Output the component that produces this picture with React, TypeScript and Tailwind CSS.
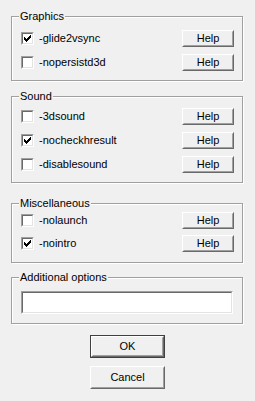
import React, { useState } from 'react';

// --- Classic dialog widgets ---

const CheckMark: React.FC = () => (
  <svg width="7" height="7" viewBox="0 0 7 7" shapeRendering="crispEdges" className="block">
    <path d="M6 0h1v3h-1zM5 1h1v3h-1zM4 2h1v3h-1zM0 2h1v3h-1zM1 3h1v3h-1zM2 4h1v3h-1zM3 3h1v3h-1z" fill="#000" />
  </svg>
);

const CheckBox: React.FC<{ checked: boolean; onToggle: () => void }> = ({ checked, onToggle }) => (
  <button
    type="button"
    onClick={onToggle}
    className="w-[13px] h-[13px] shrink-0 border border-t-[#a0a0a0] border-l-[#a0a0a0] border-b-white border-r-white"
  >
    <div className="w-full h-full bg-white border border-t-[#696969] border-l-[#696969] border-b-[#e3e3e3] border-r-[#e3e3e3] flex items-center justify-center">
      {checked && <CheckMark />}
    </div>
  </button>
);

const PushButton: React.FC<{ children: React.ReactNode; className?: string; isDefault?: boolean }> = ({ children, className = '', isDefault }) => (
  <button
    type="button"
    className={`bg-[#f0f0f0] text-black ${isDefault ? 'border border-[#404040]' : ''} ${className}`}
  >
    <div className="w-full h-full border border-t-white border-l-white border-b-[#696969] border-r-[#696969]">
      <div className="w-full h-full border border-transparent border-b-[#a0a0a0] border-r-[#a0a0a0] flex items-center justify-center leading-none">
        {children}
      </div>
    </div>
  </button>
);

const GroupBox: React.FC<{ title: string; children: React.ReactNode; className?: string }> = ({ title, children, className = '' }) => (
  <div className={`relative w-[232px] border border-[#a0a0a0] shadow-[inset_1px_1px_0_#fff,1px_1px_0_#fff] ${className}`}>
    <span className="absolute left-[7px] top-[-7px] px-[1px] bg-[#f0f0f0] leading-[13px]">{title}</span>
    {children}
  </div>
);

const OptionRow: React.FC<{ label: string; checked: boolean; onToggle: () => void }> = ({ label, checked, onToggle }) => (
  <div className="flex items-center justify-between h-[17px]">
    <div className="flex items-center gap-[5px]">
      <CheckBox checked={checked} onToggle={onToggle} />
      <span className="leading-[13px]">{label}</span>
    </div>
    <PushButton className="w-[52px] h-[17px]">Help</PushButton>
  </div>
);

// --- Main dialog ---

const App: React.FC = () => {
  const [opts, setOpts] = useState<Record<string, boolean>>({
    glide2vsync: true,
    nopersistd3d: false,
    '3dsound': false,
    nocheckhresult: true,
    disablesound: false,
    nolaunch: false,
    nointro: true,
  });
  const [extra, setExtra] = useState('');

  const toggle = (k: string) => setOpts(o => ({ ...o, [k]: !o[k] }));

  return (
    <div
      className="w-[255px] h-[401px] bg-[#f0f0f0] text-black text-[11px] pl-[11px] pt-[16px] overflow-hidden"
      style={{ fontFamily: '"Liberation Sans", Arial, sans-serif' }}
    >
      <GroupBox title="Graphics" className="pt-[13px] pb-[9px] pl-[9px] pr-[8px]">
        <div className="flex flex-col gap-[7px]">
          <OptionRow label="-glide2vsync" checked={opts.glide2vsync} onToggle={() => toggle('glide2vsync')} />
          <OptionRow label="-nopersistd3d" checked={opts.nopersistd3d} onToggle={() => toggle('nopersistd3d')} />
        </div>
      </GroupBox>

      <GroupBox title="Sound" className="mt-[15px] pt-[11px] pb-[9px] pl-[9px] pr-[8px]">
        <div className="flex flex-col gap-[7px]">
          <OptionRow label="-3dsound" checked={opts['3dsound']} onToggle={() => toggle('3dsound')} />
          <OptionRow label="-nocheckhresult" checked={opts.nocheckhresult} onToggle={() => toggle('nocheckhresult')} />
          <OptionRow label="-disablesound" checked={opts.disablesound} onToggle={() => toggle('disablesound')} />
        </div>
      </GroupBox>

      <GroupBox title="Miscellaneous" className="mt-[20px] pt-[8px] pb-[10px] pl-[9px] pr-[8px]">
        <div className="flex flex-col gap-[6px]">
          <OptionRow label="-nolaunch" checked={opts.nolaunch} onToggle={() => toggle('nolaunch')} />
          <OptionRow label="-nointro" checked={opts.nointro} onToggle={() => toggle('nointro')} />
        </div>
      </GroupBox>

      <GroupBox title="Additional options" className="mt-[14px] pt-[13px] pb-[9px] pl-[9px] pr-[9px]">
        <div className="h-[23px] border border-t-[#a0a0a0] border-l-[#a0a0a0] border-b-white border-r-white">
          <input
            value={extra}
            onChange={e => setExtra(e.target.value)}
            className="w-full h-full bg-white border border-t-[#696969] border-l-[#696969] border-b-[#e3e3e3] border-r-[#e3e3e3] px-[2px] outline-none"
          />
        </div>
      </GroupBox>

      <div className="flex flex-col items-center gap-[8px] mt-[11px] pr-[11px]">
        <PushButton isDefault className="w-[75px] h-[23px]">OK</PushButton>
        <PushButton className="w-[75px] h-[23px]">Cancel</PushButton>
      </div>
    </div>
  );
};

export default App;
